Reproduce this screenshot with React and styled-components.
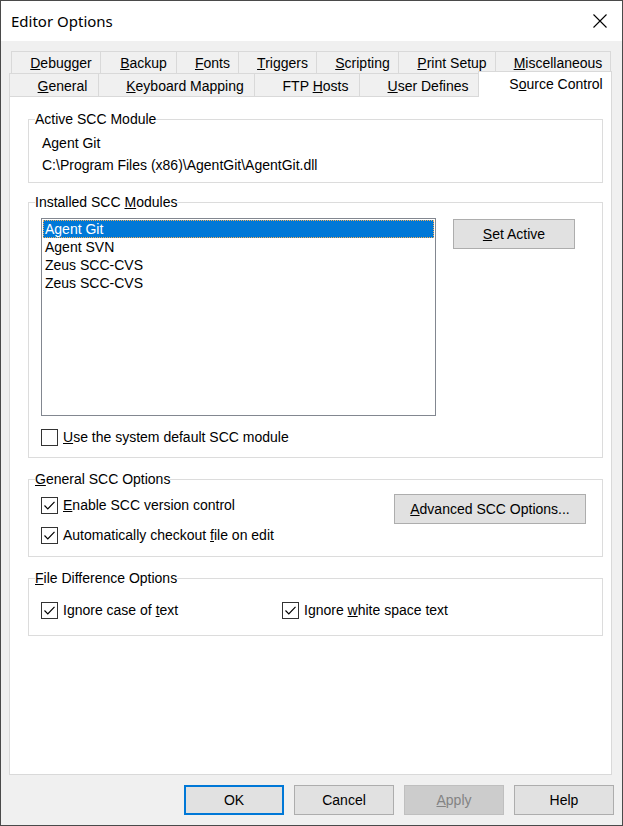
import React from 'react';
import styled, { createGlobalStyle } from 'styled-components';

const Global = createGlobalStyle`
  html, body { margin: 0; padding: 0; background: #fff; }
  body { font-family: "Liberation Sans", Arial, sans-serif; font-size: 14px; color: #000; }
  #root { width: 623px; height: 826px; }
  * { box-sizing: border-box; }
`;

const Window = styled.div`
  width: 623px;
  height: 826px;
  border: 1px solid #4a4a4a;
  display: flex;
  flex-direction: column;
  background: #f0f0f0;
  overflow: hidden;
`;

const TitleBar = styled.div`
  height: 40px;
  flex: none;
  background: #fff;
  display: flex;
  align-items: center;
  justify-content: space-between;
  padding: 0 15px 0 10px;
`;

const Title = styled.span`
  font-family: "Noto Sans", "Open Sans", sans-serif;
  font-size: 15px;
  color: #000;
`;

const Body = styled.div`
  flex: 1;
  min-height: 0;
  display: flex;
  flex-direction: column;
  padding: 10px 0 10px 0;
`;

const TabArea = styled.div`
  flex: 1;
  min-height: 0;
  display: flex;
  flex-direction: column;
  padding: 0 10px 0 8px;
`;

const TabRow = styled.div`
  display: flex;
  flex: none;
  height: ${p => p.$h}px;
  margin-left: ${p => p.$indent}px;
`;

const Tab = styled.div`
  flex: none;
  width: ${p => p.$w}px;
  display: flex;
  align-items: center;
  justify-content: center;
  padding-left: ${p => p.$shift}px;
  padding-top: ${p => p.$down || 0}px;
  border: 1px solid #d9d9d9;
  border-bottom: none;
  margin-right: -1px;
  background: #f0f0f0;
  white-space: nowrap;
`;

const ActiveTab = styled(Tab)`
  position: relative;
  z-index: 1;
  height: 26px;
  margin-top: -2px;
  margin-left: -1px;
  margin-right: 0;
  background: #fff;
  align-items: flex-start;
  padding-top: 4px;
`;

const Panel = styled.div`
  flex: 1;
  min-height: 0;
  background: #fff;
  border: 1px solid #d9d9d9;
  padding: 14px 8px 0 18px;
  display: flex;
  flex-direction: column;
`;

const Group = styled.fieldset`
  margin: ${p => p.$mt}px 0 0 0;
  padding: ${p => p.$pt}px 0 ${p => p.$pb}px 6px;
  border: 1px solid #dcdcdc;
  min-width: 0;
`;

const Legend = styled.legend`
  padding: 0;
  font-size: 14px;
  line-height: 16px;
`;

const InfoBlock = styled.div`
  padding-left: 7px;
  line-height: 22px;
`;

const ModulesRow = styled.div`
  display: flex;
  align-items: flex-start;
  padding-left: 6px;
`;

const ListBox = styled.div`
  width: 395px;
  height: 198px;
  border: 1px solid #828790;
  background: #fff;
  padding: 1px;
`;

const ListItem = styled.div`
  height: 18px;
  line-height: 18px;
  padding-left: 2px;
  white-space: nowrap;
  background: ${p => (p.$selected ? '#0078d7' : 'transparent')};
  color: ${p => (p.$selected ? '#fff' : '#000')};
  outline: ${p => (p.$selected ? '1px dotted #f5b05a' : 'none')};
  outline-offset: -1px;
`;

const Button = styled.button`
  flex: none;
  width: ${p => p.$w}px;
  height: 30px;
  margin: ${p => p.$m || '0'};
  font-family: "Liberation Sans", Arial, sans-serif;
  font-size: 14px;
  color: ${p => (p.disabled ? '#838383' : '#000')};
  background: ${p => (p.disabled ? '#cccccc' : '#e1e1e1')};
  border: ${p => (p.$default ? '2px solid #0078d7' : p.disabled ? '1px solid #bfbfbf' : '1px solid #adadad')};
  padding: 0;
  display: flex;
  align-items: center;
  justify-content: center;
`;

const CheckRow = styled.label`
  display: flex;
  align-items: center;
  height: 18px;
  gap: 5px;
  white-space: nowrap;
`;

const Box = styled.span`
  flex: none;
  width: 17px;
  height: 17px;
  border: 1px solid #333;
  background: #fff;
  display: flex;
  align-items: center;
  justify-content: center;
`;

const DefaultRow = styled.div`
  padding-left: 6px;
  margin-top: 12px;
`;

const OptionsRow = styled.div`
  display: flex;
  justify-content: space-between;
  align-items: flex-start;
  padding: 0 16px 0 6px;
`;

const CheckColumn = styled.div`
  display: flex;
  flex-direction: column;
  gap: 12px;
  padding-top: 2px;
`;

const DiffGrid = styled.div`
  display: grid;
  grid-template-columns: 241px 1fr;
  padding-left: 6px;
`;

const Footer = styled.div`
  flex: none;
  height: 30px;
  margin-top: 10px;
  display: flex;
  justify-content: flex-end;
  gap: 10px;
  padding-right: 8px;
`;

const Label = styled.span`
  white-space: pre;
`;

const CloseIcon = () => (
  <svg width="14" height="14" viewBox="0 0 14 14">
    <path d="M0.5 0.5 L13.5 13.5 M13.5 0.5 L0.5 13.5" stroke="#000" strokeWidth="1.1" fill="none" />
  </svg>
);

const Mn = ({ text, at = 0 }) => (
  <Label>
    {text.slice(0, at)}
    <u>{text[at]}</u>
    {text.slice(at + 1)}
  </Label>
);

const Check = ({ checked, children }) => (
  <CheckRow>
    <Box>
      {checked && (
        <svg width="15" height="15" viewBox="0 0 15 15">
          <path d="M2.5 7.5 L5.8 10.8 L12.5 3.8" stroke="#000" strokeWidth="1.2" fill="none" />
        </svg>
      )}
    </Box>
    {children}
  </CheckRow>
);

const row1 = [
  ['Debugger', 90],
  ['Backup', 77],
  ['Fonts', 63],
  ['Triggers', 79],
  ['Scripting', 83],
  ['Print Setup', 98],
  ['Miscellaneous', 116],
];

const modules = ['Agent Git', 'Agent SVN', 'Zeus SCC-CVS', 'Zeus SCC-CVS'];

export default function App() {
  return (
    <>
      <Global />
      <Window>
        <TitleBar>
          <Title>Editor Options</Title>
          <CloseIcon />
        </TitleBar>
        <Body>
          <TabArea>
            <TabRow $h={22} $indent={2}>
              {row1.map(([t, w]) => (
                <Tab key={t} $w={w} $shift={10}>
                  <Mn text={t} />
                </Tab>
              ))}
            </TabRow>
            <TabRow $h={23} $indent={0}>
              <Tab $w={90} $shift={17} $down={2}><Mn text="General" /></Tab>
              <Tab $w={157} $shift={17} $down={2}><Mn text="Keyboard Mapping" /></Tab>
              <Tab $w={106} $shift={17} $down={2}><Mn text="FTP Hosts" at={4} /></Tab>
              <Tab $w={121} $shift={17} $down={2}><Mn text="User Defines" /></Tab>
              <ActiveTab $w={134} $shift={22}><Mn text="Source Control" at={1} /></ActiveTab>
            </TabRow>
            <Panel>
              <Group $mt={0} $pt={5} $pb={6}>
                <Legend>Active SCC Module</Legend>
                <InfoBlock>
                  <div>Agent Git</div>
                  <div>C:\Program Files (x86)\AgentGit\AgentGit.dll</div>
                </InfoBlock>
              </Group>
              <Group $mt={11} $pt={8} $pb={11}>
                <Legend><Mn text="Installed SCC Modules" at={14} /></Legend>
                <ModulesRow>
                  <ListBox>
                    {modules.map((m, i) => (
                      <ListItem key={i} $selected={i === 0}>{m}</ListItem>
                    ))}
                  </ListBox>
                  <Button $w={122} $m="1px 0 0 17px"><Mn text="Set Active" /></Button>
                </ModulesRow>
                <DefaultRow>
                  <Check checked={false}><Mn text="Use the system default SCC module" /></Check>
                </DefaultRow>
              </Group>
              <Group $mt={13} $pt={7} $pb={12}>
                <Legend><Mn text="General SCC Options" /></Legend>
                <OptionsRow>
                  <CheckColumn>
                    <Check checked><Mn text="Enable SCC version control" /></Check>
                    <Check checked><Mn text="Automatically checkout file on edit" at={23} /></Check>
                  </CheckColumn>
                  <Button $w={192}><Mn text="Advanced SCC Options..." /></Button>
                </OptionsRow>
              </Group>
              <Group $mt={13} $pt={15} $pb={16}>
                <Legend><Mn text="File Difference Options" /></Legend>
                <DiffGrid>
                  <Check checked><Mn text="Ignore case of text" at={15} /></Check>
                  <Check checked><Mn text="Ignore white space text" at={7} /></Check>
                </DiffGrid>
              </Group>
            </Panel>
          </TabArea>
          <Footer>
            <Button $w={100} $default>OK</Button>
            <Button $w={100}>Cancel</Button>
            <Button $w={100} disabled><Mn text="Apply" /></Button>
            <Button $w={100}>Help</Button>
          </Footer>
        </Body>
      </Window>
    </>
  );
}
